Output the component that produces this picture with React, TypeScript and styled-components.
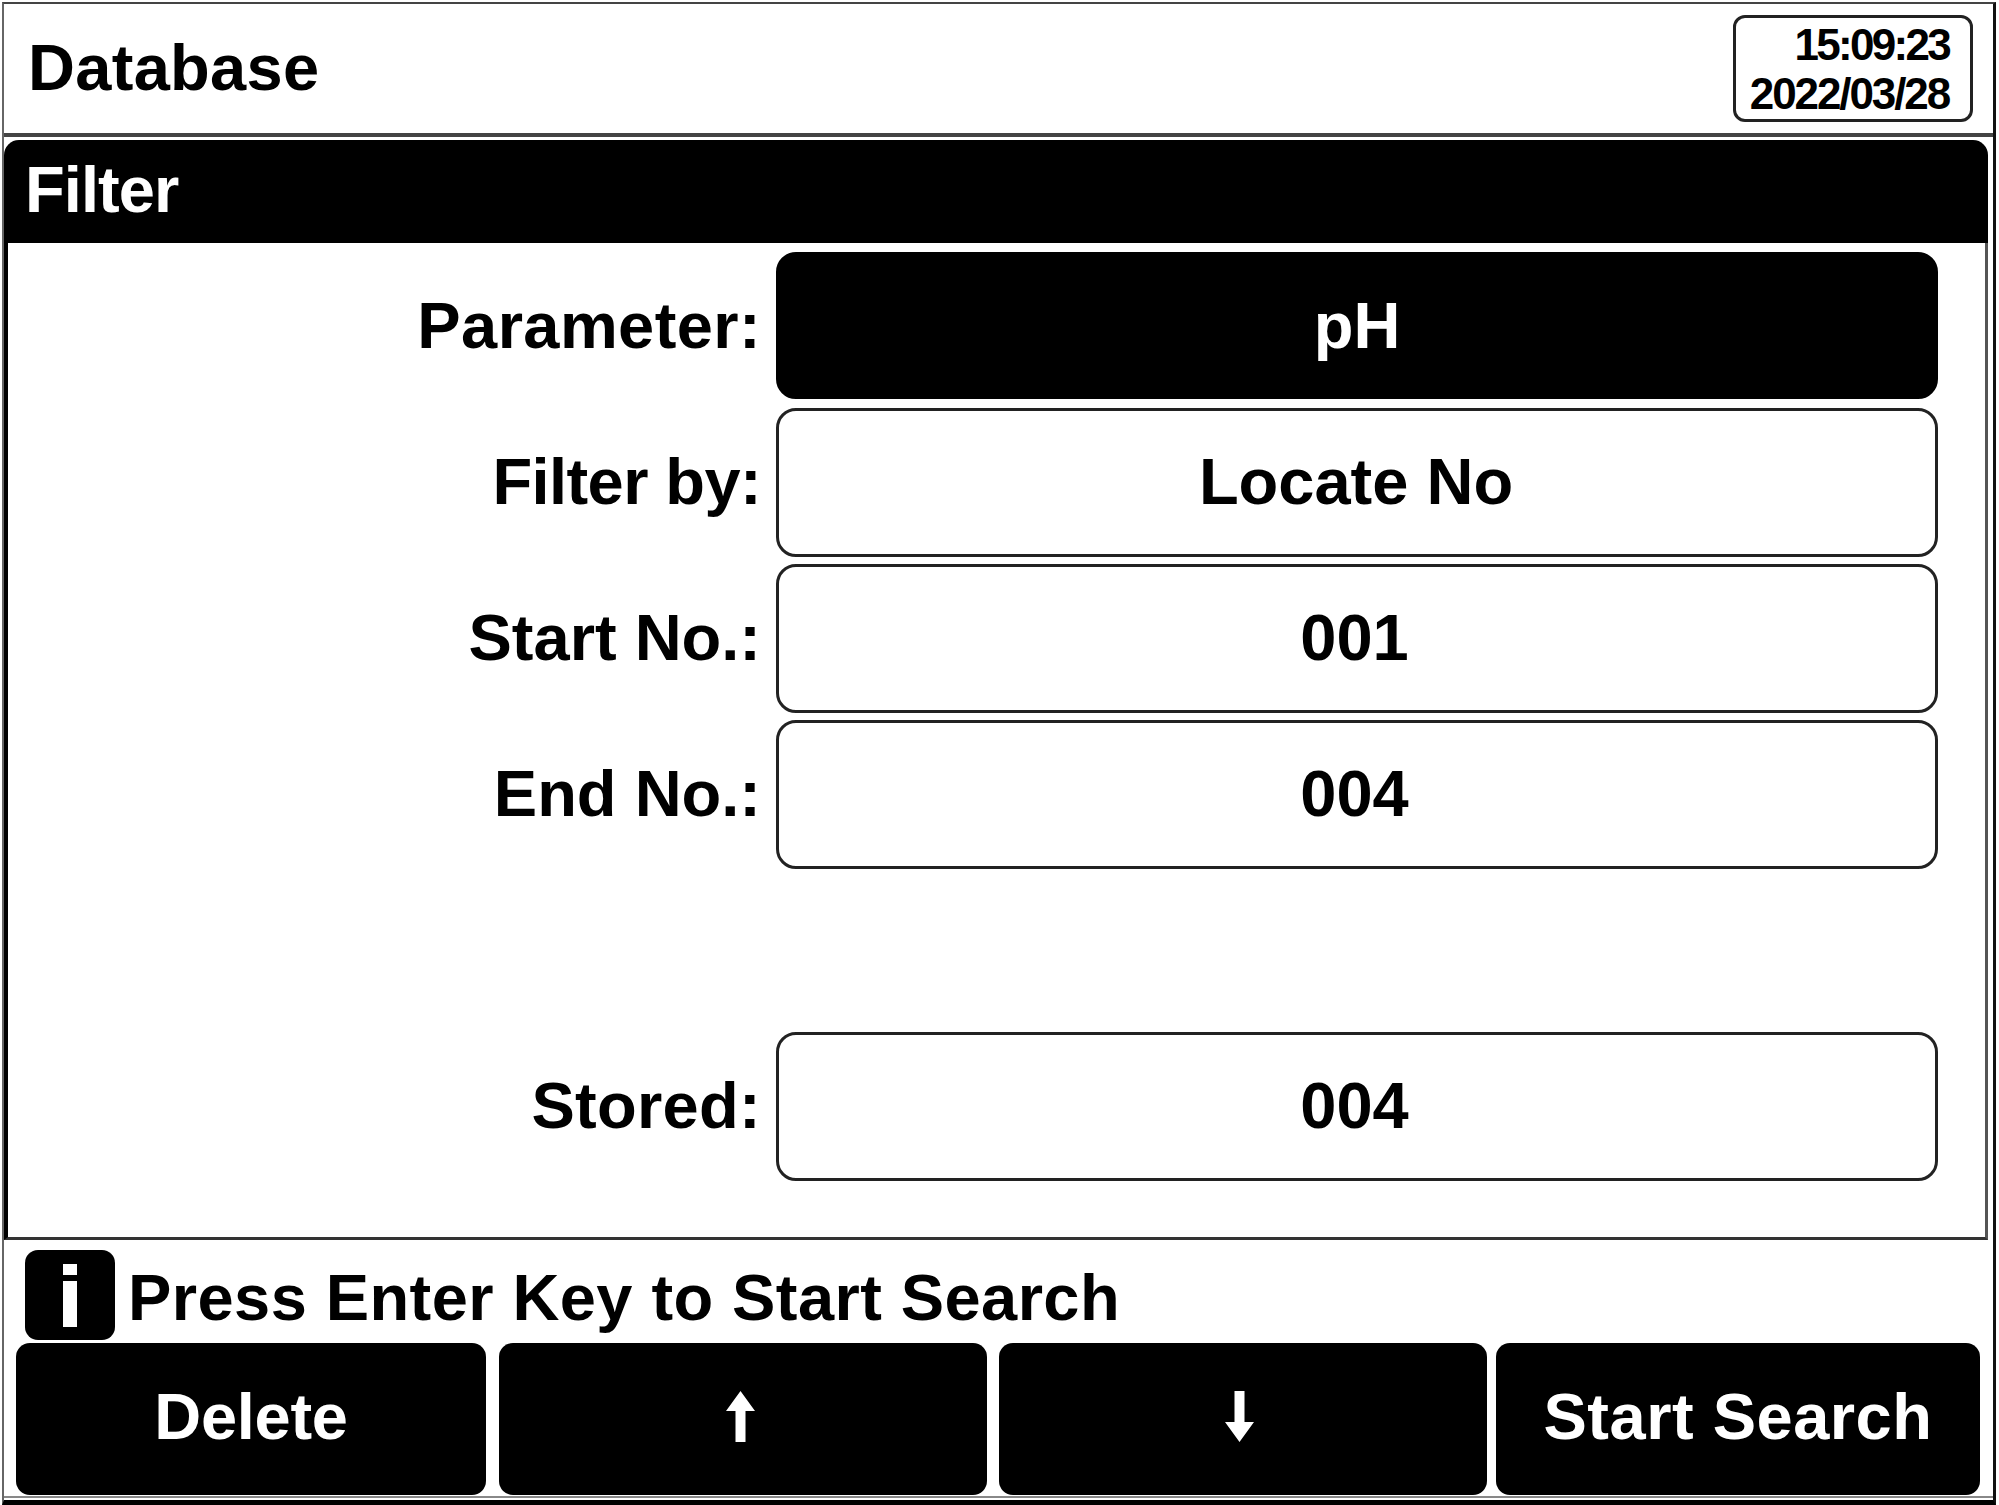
import React from "react";
import styled, { createGlobalStyle } from "styled-components";

const Global = createGlobalStyle`
  html, body { margin: 0; padding: 0; background: #fff; }
  * { box-sizing: border-box; }
`;

const Screen = styled.div`
  width: 1999px;
  height: 1505px;
  padding: 2px 3px 0 2px;
  background: #fff;
  color: #000;
  font-family: "Liberation Sans", Arial, sans-serif;
  font-weight: 700;
  font-size: 65px;
  overflow: hidden;
`;

const Device = styled.div`
  height: 100%;
  display: flex;
  flex-direction: column;
  border-top: 2px solid #444;
  border-left: 2px solid #666;
  border-right: 3px solid #111;
  border-bottom: 5px solid #000;
`;

const Header = styled.header`
  flex: 0 0 133px;
  display: flex;
  align-items: center;
  justify-content: space-between;
  padding: 0 20px 0 24px;
  border-bottom: 4px solid #444;
`;

const Title = styled.h1`
  margin: 0 0 3px;
  font: inherit;
  letter-spacing: 0.3px;
`;

const Clock = styled.div`
  width: 240px;
  height: 107px;
  padding: 0 21px 0 0;
  border: 3px solid #222;
  border-radius: 12px;
  display: flex;
  flex-direction: column;
  align-items: flex-end;
  justify-content: center;
  font-size: 44px;
  line-height: 49px;
`;

const ClockLine = styled.div<{ $tracking: number }>`
  letter-spacing: ${(p) => p.$tracking}px;
`;

const Panel = styled.section`
  flex: 0 0 1100px;
  margin: 3px 5px 0 0;
  display: flex;
  flex-direction: column;
`;

const PanelTitle = styled.div`
  flex: 0 0 103px;
  display: flex;
  align-items: center;
  padding: 0 0 5px 21px;
  background: #000;
  color: #fff;
  border-radius: 15px 15px 0 0;
  letter-spacing: -0.9px;
`;

const PanelBody = styled.div`
  flex: 1;
  display: flex;
  flex-direction: column;
  gap: 7px;
  padding: 9px 47px 0 0;
  border-left: 4px solid #000;
  border-right: 3px solid #555;
  border-bottom: 3px solid #333;
`;

const Row = styled.div`
  display: grid;
  grid-template-columns: 751px 1fr;
  column-gap: 17px;
  height: 149px;
  align-items: center;
`;

const Spacer = styled.div`
  height: 149px;
`;

const Label = styled.div<{ $tracking: number }>`
  text-align: right;
  padding: 0 0 3px;
  margin: 0 -2px 0 0;
  letter-spacing: ${(p) => p.$tracking}px;
`;

const Value = styled.div<{ $active?: boolean; $nudge?: number }>`
  height: ${(p) => (p.$active ? "147px" : "100%")};
  align-self: start;
  display: flex;
  align-items: center;
  justify-content: center;
  padding: 0 ${(p) => p.$nudge ?? 0}px ${(p) => (p.$active ? 0 : 3)}px 0;
  border: 3px solid ${(p) => (p.$active ? "#000" : "#222")};
  border-radius: 20px;
  background: ${(p) => (p.$active ? "#000" : "#fff")};
  color: ${(p) => (p.$active ? "#fff" : "#000")};
`;

const InfoRow = styled.div`
  flex: 0 0 103px;
  display: flex;
  align-items: flex-start;
  gap: 13px;
  padding: 10px 0 0 21px;
`;

const InfoText = styled.span`
  display: block;
  margin-top: 3px;
  line-height: 90px;
  letter-spacing: 0.42px;
`;

const InfoIcon = styled.svg`
  flex: 0 0 90px;
  width: 90px;
  height: 90px;
`;

const ButtonRow = styled.div`
  flex: 0 0 155px;
  display: flex;
  padding: 0 0 1px 12px;
  border-bottom: 2px solid #888;
`;

const SoftKey = styled.button<{ $width: number; $gap: number; $tracking?: number }>`
  flex: 0 0 ${(p) => p.$width}px;
  margin: 0 0 0 ${(p) => p.$gap}px;
  display: flex;
  align-items: center;
  justify-content: center;
  padding: 0 0 6px;
  border: 0;
  border-radius: 14px;
  background: #000;
  color: #fff;
  font: inherit;
  letter-spacing: ${(p) => p.$tracking ?? 0}px;
`;

const ArrowIcon = styled.svg<{ $offset: number }>`
  width: 29px;
  height: 51px;
  margin: 0 ${(p) => p.$offset}px 0 0;
`;

const rows = [
  { label: "Parameter:", value: "pH", active: true, tracking: 0.4, nudge: 0 },
  { label: "Filter by:", value: "Locate No", tracking: -0.6, nudge: 2 },
  { label: "Start No.:", value: "001", tracking: 0, nudge: 5 },
  { label: "End No.:", value: "004", tracking: 0, nudge: 5 },
];

const Up = () => (
  <ArrowIcon $offset={6} viewBox="0 0 29 51" aria-hidden="true">
    <path d="M14.5 0 L29 20 H19.5 V51 H9.5 V20 H0 Z" fill="#fff" />
  </ArrowIcon>
);

const Down = () => (
  <ArrowIcon $offset={8} viewBox="0 0 29 51" aria-hidden="true">
    <path d="M14.5 51 L29 31 H19.5 V0 H9.5 V31 H0 Z" fill="#fff" />
  </ArrowIcon>
);

export default function App() {
  return (
    <>
      <Global />
      <Screen>
        <Device>
          <Header>
            <Title>Database</Title>
            <Clock>
              <ClockLine $tracking={-2.7}>15:09:23</ClockLine>
              <ClockLine $tracking={-2.1}>2022/03/28</ClockLine>
            </Clock>
          </Header>
          <Panel>
            <PanelTitle>Filter</PanelTitle>
            <PanelBody>
              {rows.map((r) => (
                <Row key={r.label}>
                  <Label $tracking={r.tracking}>{r.label}</Label>
                  <Value $active={r.active} $nudge={r.nudge}>{r.value}</Value>
                </Row>
              ))}
              <Spacer />
              <Row>
                <Label $tracking={0.3}>Stored:</Label>
                <Value $nudge={5}>004</Value>
              </Row>
            </PanelBody>
          </Panel>
          <InfoRow>
            <InfoIcon viewBox="0 0 90 90" aria-hidden="true">
              <rect width="90" height="90" rx="13" fill="#000" />
              <rect x="38" y="14" width="14" height="11" fill="#fff" />
              <rect x="38" y="31" width="14" height="46" fill="#fff" />
            </InfoIcon>
            <InfoText>Press Enter Key to Start Search</InfoText>
          </InfoRow>
          <ButtonRow>
            <SoftKey $width={470} $gap={0} $tracking={-0.3}>Delete</SoftKey>
            <SoftKey $width={488} $gap={13} aria-label="Up"><Up /></SoftKey>
            <SoftKey $width={488} $gap={12} aria-label="Down"><Down /></SoftKey>
            <SoftKey $width={484} $gap={9} $tracking={0.5}>Start Search</SoftKey>
          </ButtonRow>
        </Device>
      </Screen>
    </>
  );
}
